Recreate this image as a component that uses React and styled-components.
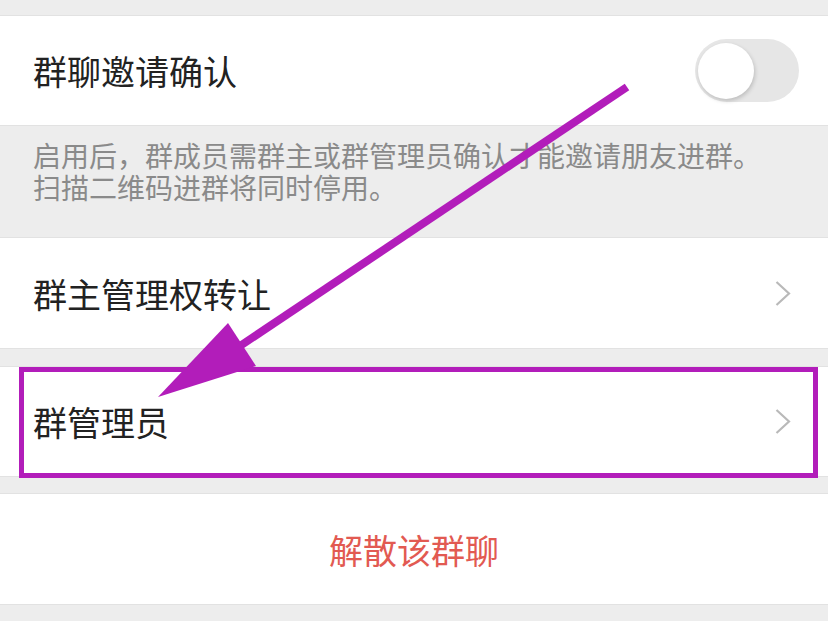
import styled, { createGlobalStyle } from "styled-components";

const GlobalStyle = createGlobalStyle`
    html, body {
        margin: 0;
        padding: 0;
        background: #ededed;
    }
    body {
        font-family: "Noto Sans CJK SC", "Noto Sans", sans-serif;
    }
`;

const Page = styled.div`
    position: relative;
    width: 828px;
    height: 621px;
    overflow: hidden;
    background: #ededed;
`;

const Gap = styled.div`
    height: ${(props) => props.size}px;
`;

const Cell = styled.div`
    display: flex;
    align-items: center;
    justify-content: ${(props) => (props.center ? "center" : "space-between")};
    height: ${(props) => props.height}px;
    box-sizing: border-box;
    padding: 0 33px;
    background: #fff;
    border-top: 1px solid #e2e2e2;
    border-bottom: 1px solid #e2e2e2;
`;

const Label = styled.span`
    font-size: 34px;
    color: ${(props) => (props.danger ? "#e25a52" : "#222")};
`;

const Note = styled.div`
    height: 111px;
    box-sizing: border-box;
    padding: 13px 33px 0;
    font-size: 28px;
    line-height: 32px;
    color: #8a8a8a;
`;

const Track = styled.div`
    display: flex;
    align-items: center;
    width: 104px;
    height: 63px;
    margin-right: -4px;
    box-sizing: border-box;
    padding: 0 3px;
    border-radius: 32px;
    background: #e6e6e6;
`;

const Knob = styled.div`
    width: 56px;
    height: 56px;
    border-radius: 50%;
    background: #fff;
    box-shadow: 1px 2px 4px rgba(0, 0, 0, 0.18);
`;

const Chevron = () => (
    <svg width="16" height="25" viewBox="0 0 16 25" style={{ marginRight: 4 }}>
        <path d="M1.5 1 L14 12.5 L1.5 24" fill="none" stroke="#b9b9b9" strokeWidth="2.2" />
    </svg>
);

const Overlay = styled.svg`
    position: absolute;
    left: 0;
    top: 0;
    pointer-events: none;
`;

const App = () => {
    return (
        <Page>
            <GlobalStyle />
            <Gap size={15} />
            <Cell height={111}>
                <Label>群聊邀请确认</Label>
                <Track>
                    <Knob />
                </Track>
            </Cell>
            <Note>
                启用后，群成员需群主或群管理员确认才能邀请朋友进群。
                <br />
                扫描二维码进群将同时停用。
            </Note>
            <Cell height={112}>
                <Label>群主管理权转让</Label>
                <Chevron />
            </Cell>
            <Gap size={17} />
            <Cell height={111}>
                <Label>群管理员</Label>
                <Chevron />
            </Cell>
            <Gap size={16} />
            <Cell height={112} center>
                <Label danger>解散该群聊</Label>
            </Cell>

            {/* annotation drawn on top of the screenshot */}
            <Overlay width="828" height="621" viewBox="0 0 828 621">
                <rect x="21.5" y="369.5" width="794" height="106" fill="none" stroke="#b21dba" strokeWidth="5" />
                <line x1="627" y1="87" x2="240" y2="346" stroke="#b21dba" strokeWidth="8" />
                <polygon points="158,397 228,323 256,366" fill="#b21dba" />
            </Overlay>
        </Page>
    );
};

export default App;
